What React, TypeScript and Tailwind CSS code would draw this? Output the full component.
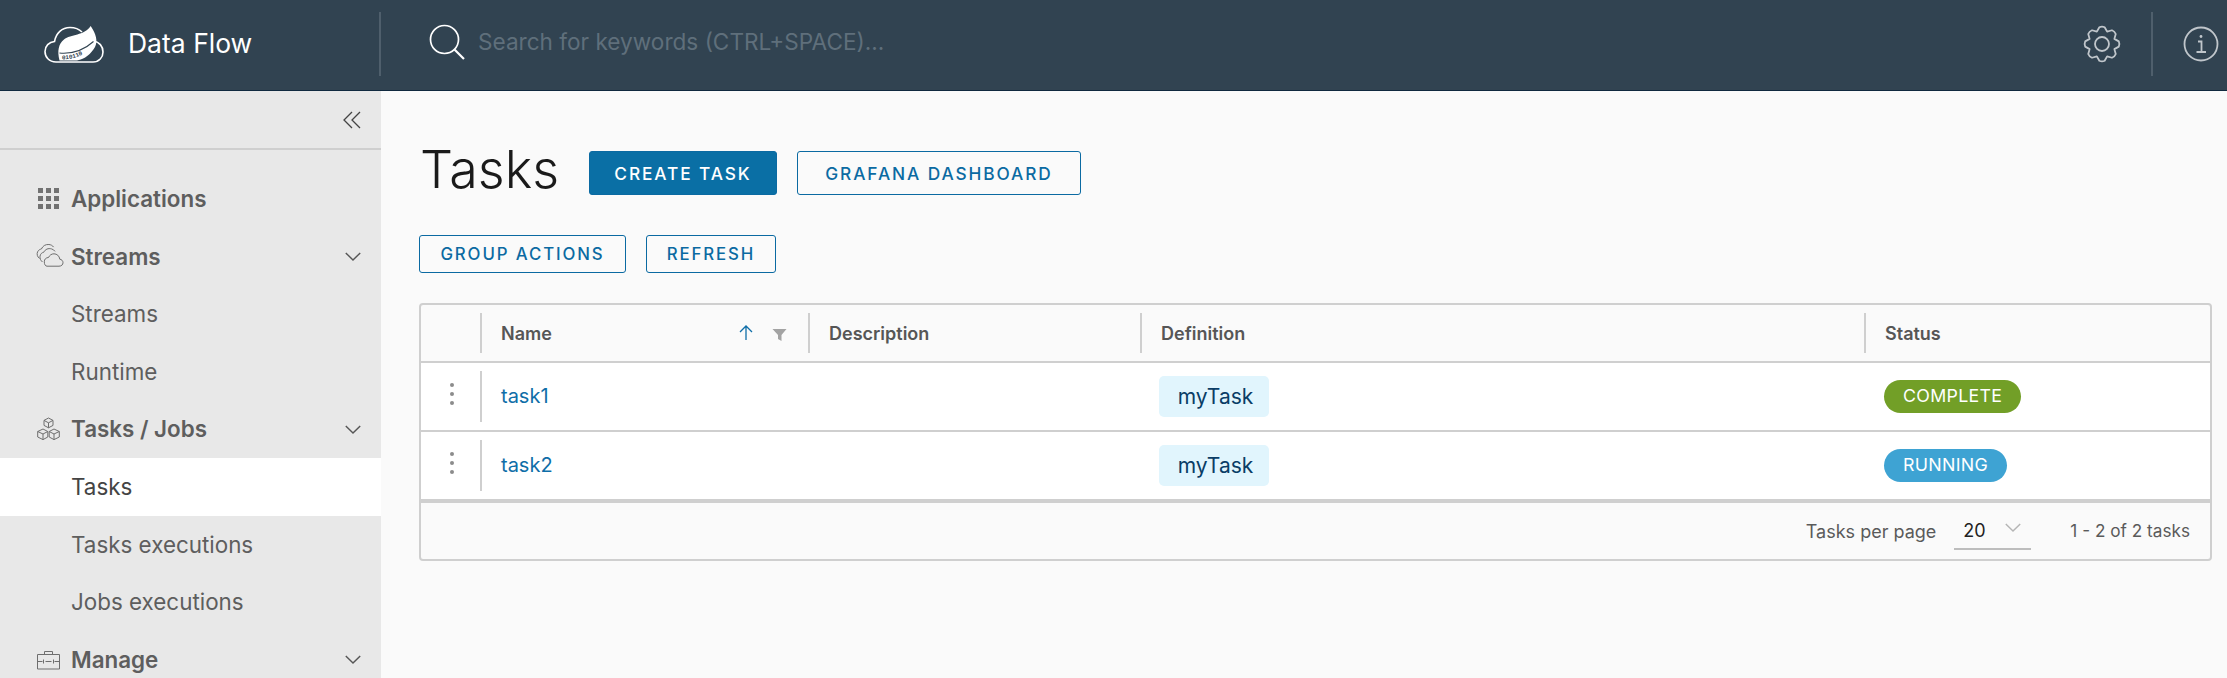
import React from 'react';

// 8 tooth gear outline, centred on 20,20
const gearPath = () => {
  const teeth = 8;
  const pts: string[] = [];
  for (let i = 0; i < teeth; i++) {
    const a = (i / teeth) * Math.PI * 2 - Math.PI / 2;
    const step = (Math.PI * 2) / teeth;
    const p = (r: number, o: number) =>
      `${(20 + r * Math.cos(a + o * step)).toFixed(2)} ${(20 + r * Math.sin(a + o * step)).toFixed(2)}`;
    pts.push(`${i === 0 ? 'M' : 'L'}${p(13.4, -0.5)} L${p(17, -0.2)} Q${p(18, 0)} ${p(17, 0.2)} L${p(13.4, 0.5)}`);
  }
  return pts.join(' ') + ' Z';
};

const Chevron = ({ className }: { className: string }) => (
  <svg viewBox="0 0 20 12" fill="none" stroke="currentColor" strokeWidth="1.6" className={className}>
    <path d="M2 2l8 8 8-8" />
  </svg>
);

const Logo = () => (
  <svg viewBox="0 0 60 40" width="60" height="40" fill="none">
    <defs>
      <path id="digits" d="M17 35.500C28 35.500 40 32.500 50 22" />
    </defs>
    <path d="M12 38C5 38 1 33 1 27.5 1 22 5 18 10.5 17.5 12 9 18 3.5 26 3.5 31 3.5 35 5 38 8M50 17C55 18 59 22 59 28 59 33.5 55 38 49 38H12" stroke="#fff" strokeWidth="1.6" />
    <path d="M15.500 36.500C13 27 14.500 20 20 15.500 27 10 40 12 46.700 2 52 10 54 17 51 23 47 30 41 35 33 36.500Z" fill="#fff" />
    <path d="M15.500 29C27 30 39 27 49.500 17.500" stroke="#314351" strokeWidth="1.100" />
    <text fontSize="6" fontFamily="'Liberation Mono', monospace" fontWeight="700" fill="#314351">
      <textPath href="#digits" startOffset="1">010110</textPath>
    </text>
  </svg>
);

const AppsIcon = () => (
  <svg viewBox="0 0 21 21" width="21" height="21" fill="#727272">
    {[0, 8, 16].map((y) =>
      [0, 8, 16].map((x) => <rect key={`${x}-${y}`} x={x} y={y} width="5" height="5" />)
    )}
  </svg>
);

const CloudsIcon = () => (
  <svg viewBox="0 0 28 24" width="28" height="24" fill="none" stroke="#6e6e6e" strokeWidth="1">
    <path d="M11 23.2h12c2.5 0 4-1.6 4-3.5s-1.4-3.3-3.2-3.5c-.4-3.3-3-5.4-5.8-5.4-2.4 0-4.500 1.400-5.500 3.700-2.500 0-4.200 1.800-4.200 4.300 0 2.400 1 4.400 2.700 4.400Z" />
    <path d="M6.500 19c-1.800-1.500-2.800-3.500-2.500-5.800.3-2.200 2-3.700 3.800-4 1.500-3 4.400-4.200 7.700-3.300 1.500.4 2.800 1.300 3.500 2.500" />
    <path d="M3.600 15.500C1.200 13.800.6 11 1.600 8.800c.8-1.600 2.300-2.600 3.800-2.800 1.300-3 4-4.800 7.500-4.500 2 .2 3.600 1 4.700 2.600" />
  </svg>
);

const CubesIcon = () => (
  <svg viewBox="0 0 24 24" width="25" height="24" fill="none" stroke="#6e6e6e" strokeWidth="1">
    <path d="M12 1l4.500 2.400v5L12 10.800 7.500 8.400v-5zM7.500 3.400L12 5.800l4.500-2.400M12 5.800v5" />
    <path d="M6.500 12l4.800 2.500v5.500l-4.800 2.600L1.200 20v-5.500zM1.200 14.500L6.500 17l4.800-2.500M6.500 17v5.600" />
    <path d="M17.500 12l5.300 2.500V20l-5.300 2.600-4.800-2.600v-5.500zM12.700 14.500l4.800 2.500 5.300-2.500M17.500 17v5.600" />
  </svg>
);

const CaseIcon = () => (
  <svg viewBox="0 0 24 20" width="25" height="20" fill="none" stroke="#6e6e6e" strokeWidth="1">
    <path d="M1 4.500h22V19H1zM8 4.500V1.500h8v3M1 11.500h5M18 11.500h5M9 11.500h6M7 9.500v4M17 9.500v4" />
  </svg>
);

const navRows = [
  { label: 'Applications', head: true, icon: <div className="pl-[2px]"><AppsIcon /></div>, chevron: false },
  { label: 'Streams', head: true, icon: <div className="pb-[3px]"><CloudsIcon /></div>, chevron: true },
  { label: 'Streams' },
  { label: 'Runtime' },
  { label: 'Tasks / Jobs', head: true, icon: <CubesIcon />, chevron: true },
  { label: 'Tasks', active: true },
  { label: 'Tasks executions' },
  { label: 'Jobs executions' },
  { label: 'Manage', head: true, icon: <CaseIcon />, chevron: true },
];

const gridCols = 'grid grid-cols-[59px_328px_332px_724px_1fr]';

const Divider = ({ className }: { className: string }) => <div className={`w-[2px] bg-[#cfcfcf] shrink-0 ${className}`} />;

const HeadCell = ({ label, children }: { label: string; children?: React.ReactNode }) => (
  <div className="flex items-center">
    <Divider className="h-[40px]" />
    <span className="ml-[19px] text-[18px] font-semibold text-[#565656]">{label}</span>
    {children}
  </div>
);

const Kebab = () => (
  <div className="flex flex-col items-center gap-[5px] pl-[4px] mb-[5px] w-[58px]">
    <span className="w-[4px] h-[4px] rounded-full bg-[#8c8c8c]" />
    <span className="w-[4px] h-[4px] rounded-full bg-[#8c8c8c]" />
    <span className="w-[4px] h-[4px] rounded-full bg-[#8c8c8c]" />
  </div>
);

const TaskRow = ({ name, status, pill }: { name: string; status: string; pill: string }) => (
  <div className={`${gridCols} h-[67px] bg-white items-center`}>
    <Kebab />
    <div className="flex items-center">
      <Divider className="h-[51px]" />
      <span className="ml-[19px] mb-[1px] text-[20px] text-[#0f6ea8]">{name}</span>
    </div>
    <div />
    <div className="pl-[19px]">
      <span className="inline-flex items-center justify-center w-[110px] h-[41px] pl-[3px] rounded-[5px] bg-[#e1f5fd] text-[21px] text-[#0a3d66]">myTask</span>
    </div>
    <div className="pl-[20px]">
      <span className={`inline-flex items-center h-[33px] px-[19px] rounded-full text-white text-[17.800px] tracking-[0.3px] ${pill}`}>{status}</span>
    </div>
  </div>
);

const btn = 'inline-flex items-center justify-center rounded-[3px] border-[1.5px] border-[#0b6aa2] font-medium tracking-[1.9px]';

export default function App() {
  return (
    <div className="w-[2227px] h-[678px] overflow-hidden flex flex-col bg-[#fafafa] font-['Inter',sans-serif]">
      <header className="h-[91px] shrink-0 flex items-center bg-[#314351] border-b border-[#10293f]">
        <div className="w-[381px] h-[64px] shrink-0 flex items-center pl-[44px] border-r-[2px] border-[#4f5f6c] mb-[3px]">
          <Logo />
          <span className="ml-[24px] text-[26.500px] text-white">Data Flow</span>
        </div>
        <div className="flex items-center flex-1 pl-[48px] pb-[7px]">
          <svg viewBox="0 0 36 36" width="36" height="36" fill="none" stroke="#fff" strokeWidth="1.7">
            <circle cx="15.500" cy="15.500" r="14" />
            <path d="M25.500 25.500L35 35" strokeWidth="2.200" />
          </svg>
          <span className="ml-[13px] text-[22.600px] text-[#5f6f7b]">Search for keywords (CTRL+SPACE)...</span>
        </div>
        <svg viewBox="0 0 40 40" width="40" height="40" fill="none" stroke="#c0c6cb" strokeWidth="1.800" strokeLinejoin="round" className="mb-[3px]">
          <path d={gearPath()} />
          <circle cx="20" cy="20" r="7" />
        </svg>
        <div className="ml-[29px] w-[2px] h-[64px] mb-[3px] bg-[#4f5f6c]" />
        <svg viewBox="0 0 36 36" width="36" height="36" fill="none" stroke="#c0c6cb" strokeWidth="1.800" className="ml-[30px] mr-[8px] mb-[3px]">
          <circle cx="18" cy="18" r="16.500" />
          <circle cx="18" cy="10.500" r="1.400" fill="#c0c6cb" stroke="none" />
          <path d="M15 15.500h3.500v10M13.500 26h9.500" />
        </svg>
      </header>

      <div className="flex flex-1 min-h-0">
        <aside className="w-[381px] shrink-0 bg-[#e8e8e8]">
          <div className="h-[59px] flex items-center justify-end pr-[19px] border-b-[2px] border-[#cfcfcf] text-[#444]">
            <svg viewBox="0 0 20 20" width="20" height="20" fill="none" stroke="currentColor" strokeWidth="1.300">
              <path d="M10 2L2 10l8 8M18 2l-8 8 8 8" />
            </svg>
          </div>
          <nav className="pt-[20px]">
            {navRows.map((r, i) => (
              <div
                key={i}
                className={`h-[57.6px] flex items-center pr-[19px] text-[22.400px] ${r.active ? 'bg-white text-[#444]' : 'text-[#5e5e5e]'} ${r.head ? 'font-semibold' : ''}`}
              >
                <div className="w-[71px] pl-[36px] shrink-0 flex items-center">{r.icon}</div>
                <span>{r.label}</span>
                {r.chevron && <Chevron className="ml-auto w-[18px] h-[11px] text-[#565656]" />}
              </div>
            ))}
          </nav>
        </aside>

        <main className="flex-1 min-w-0 pl-[38px] pr-[15px] pt-[60px]">
          <div className="flex items-center h-[44px]">
            <h1 className="w-[170px] pl-[1px] pb-[7px] text-[52px] font-light text-[#1a1a1a] leading-none">Tasks</h1>
            <button className={`${btn} w-[188px] h-[44px] pt-[1px] bg-[#0a6fa5] text-white text-[17.300px]`}>CREATE TASK</button>
            <button className={`${btn} ml-[20px] w-[284px] h-[44px] pt-[1px] text-[#0b6aa2] text-[17.300px]`}>GRAFANA DASHBOARD</button>
          </div>
          <div className="flex items-center gap-[20px] mt-[40px]">
            <button className={`${btn} w-[207px] h-[38px] pt-[1px] text-[#0b6aa2] text-[16.800px]`}>GROUP ACTIONS</button>
            <button className={`${btn} w-[130px] h-[38px] pt-[1px] text-[#0b6aa2] text-[16.800px]`}>REFRESH</button>
          </div>
          <section className="mt-[30px] border-2 border-[#cfcfcf] rounded-[4px] overflow-hidden">
            <div className={`${gridCols} h-[56px] items-center`}>
              <div />
              <HeadCell label="Name">
                <div className="ml-auto mr-[21px] flex items-center gap-[19px]">
                  <svg viewBox="0 0 14 16" width="14" height="16" fill="none" stroke="#0f6ea8" strokeWidth="1.300">
                    <path d="M7 15V1M1 7l6-6 6 6" />
                  </svg>
                  <svg viewBox="0 0 14 14" width="15" height="14" fill="#a3a3a3" className="mt-[3px]">
                    <path d="M0 1h14L9 7v6L5.500 11V7z" />
                  </svg>
                </div>
              </HeadCell>
              <HeadCell label="Description" />
              <HeadCell label="Definition" />
              <HeadCell label="Status" />
            </div>
            <div className="h-[2px] bg-[#cfcfcf]" />
            <TaskRow name="task1" status="COMPLETE" pill="bg-[#729f27]" />
            <div className="h-[2px] bg-[#cfcfcf]" />
            <TaskRow name="task2" status="RUNNING" pill="bg-[#3ea3d3]" />
            <div className="h-[4px] bg-[#cfcfcf]" />
            <div className="h-[56px] flex items-center justify-end pr-[20px] text-[#5a5a5a]">
              <span className="text-[18px]">Tasks per page</span>
              <div className="relative ml-[18px] w-[77px] h-[38px] flex items-center border-b-2 border-[#bdbdbd] pl-[9px] text-[#222] text-[18px]">
                20
                <Chevron className="absolute right-[9px] top-[10px] w-[18px] h-[11px] text-[#b5b5b5]" />
              </div>
              <span className="ml-[39px] text-[17.200px]">1 - 2 of 2 tasks</span>
            </div>
          </section>
        </main>
      </div>
    </div>
  );
}
